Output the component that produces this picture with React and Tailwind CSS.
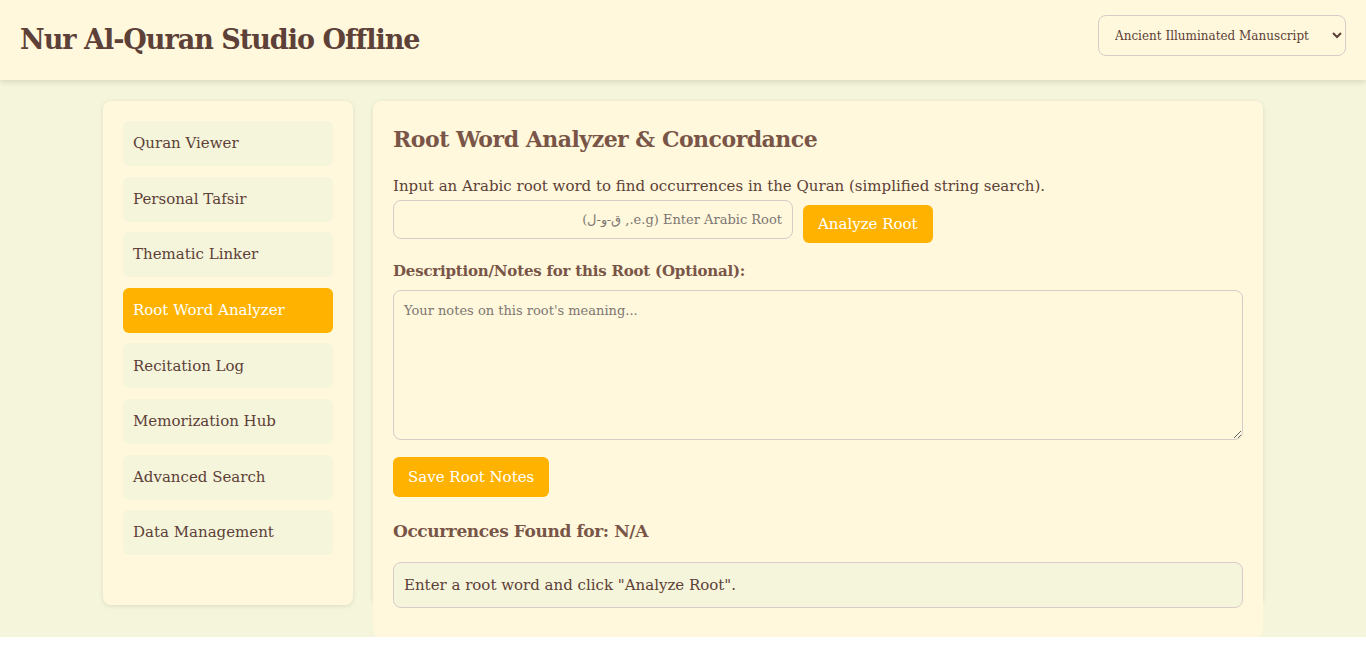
import React from 'react';

const navItems = [
  'Quran Viewer',
  'Personal Tafsir',
  'Thematic Linker',
  'Root Word Analyzer',
  'Recitation Log',
  'Memorization Hub',
  'Advanced Search',
  'Data Management',
];

const App = () => {
  const [active, setActive] = React.useState('Root Word Analyzer');
  const [root, setRoot] = React.useState('');
  const [notes, setNotes] = React.useState('');

  return (
    <div className="font-['DejaVu_Serif',serif] text-[#5d4037]">
      {/* Header */}
      <header className="relative z-10 h-[80px] px-[20px] flex items-center justify-between bg-[#fff8dc] shadow-[0_2px_6px_rgba(0,0,0,0.12)]">
        <h1 className="text-[27px] tracking-[-1px] font-bold text-[#5d4037]">Nur Al-Quran Studio Offline</h1>
        <select className="mb-[9px] w-[248px] h-[41px] pl-[12px] pr-[6px] text-[12px] rounded-lg border border-[#d7ccc8] bg-[#fff8dc] text-[#5d4037]">
          <option>Ancient Illuminated Manuscript</option>
          <option>Desert Dawn</option>
          <option>Night Recitation</option>
        </select>
      </header>

      {/* Body */}
      <div className="h-[557px] bg-[#f5f5dc] pt-[21px] flex justify-center gap-[20px]">
        {/* Sidebar */}
        <nav className="w-[250px] h-[504px] p-[20px] rounded-lg bg-[#fff8dc] shadow-[0_1px_5px_rgba(0,0,0,0.1)] flex flex-col gap-[10.6px]">
          {navItems.map((item) => (
            <button
              key={item}
              type="button"
              onClick={() => setActive(item)}
              className={`h-[45px] px-[10px] flex items-center text-left text-[15px] rounded-md ${
                active === item ? 'bg-[#ffb300] text-white' : 'bg-[#f5f5dc] text-[#5d4037]'
              }`}
            >
              {item}
            </button>
          ))}
        </nav>

        {/* Main panel */}
        <main className="w-[890px] h-[504px] rounded-lg shadow-[0_1px_5px_rgba(0,0,0,0.1)]">
          <div className="h-[536px] p-[20px] rounded-lg bg-[#fff8dc]">
            <h2 className="text-[22px] leading-[36px] tracking-[-0.5px] font-bold text-[#795548]">Root Word Analyzer &amp; Concordance</h2>
            <p className="mt-[18px] text-[15px] leading-[22px]">
              Input an Arabic root word to find occurrences in the Quran (simplified string search).
            </p>
            <div className="mt-[3px] flex items-start">
              <input
                dir="rtl"
                value={root}
                onChange={(e) => setRoot(e.target.value)}
                placeholder="Enter Arabic Root (e.g., ق-و-ل)"
                className="w-[400px] h-[39px] px-[10px] text-[13px] rounded-lg border border-[#d7ccc8] bg-[#fff8dc] placeholder:text-[#7d7672] outline-none"
              />
              <button type="button" className="ml-[10px] mt-[5px] h-[38px] px-[15px] rounded-md bg-[#ffb300] text-white text-[15px]">
                Analyze Root
              </button>
            </div>

            <label className="block mt-[16px] text-[15px] leading-[24px] tracking-[-0.2px] font-bold text-[#795548]">
              Description/Notes for this Root (Optional):
            </label>
            <textarea
              value={notes}
              onChange={(e) => setNotes(e.target.value)}
              placeholder="Your notes on this root's meaning..."
              className="block mt-[7px] w-[850px] h-[150px] p-[10px] text-[13px] rounded-lg border border-[#d7ccc8] bg-[#fff8dc] placeholder:text-[#7d7672] outline-none"
            />

            <button type="button" className="mt-[17px] h-[40px] px-[15px] rounded-md bg-[#ffb300] text-white text-[15px]">
              Save Root Notes
            </button>

            <h3 className="mt-[20px] text-[17px] leading-[28px] tracking-[-0.4px] font-bold text-[#795548]">Occurrences Found for: N/A</h3>

            <div className="mt-[17px] h-[46px] px-[10px] flex items-center rounded-lg border border-[#d7ccc8] bg-[#f5f5dc] text-[15px]">
              Enter a root word and click "Analyze Root".
            </div>
          </div>
        </main>
      </div>
    </div>
  );
};

export default App;
